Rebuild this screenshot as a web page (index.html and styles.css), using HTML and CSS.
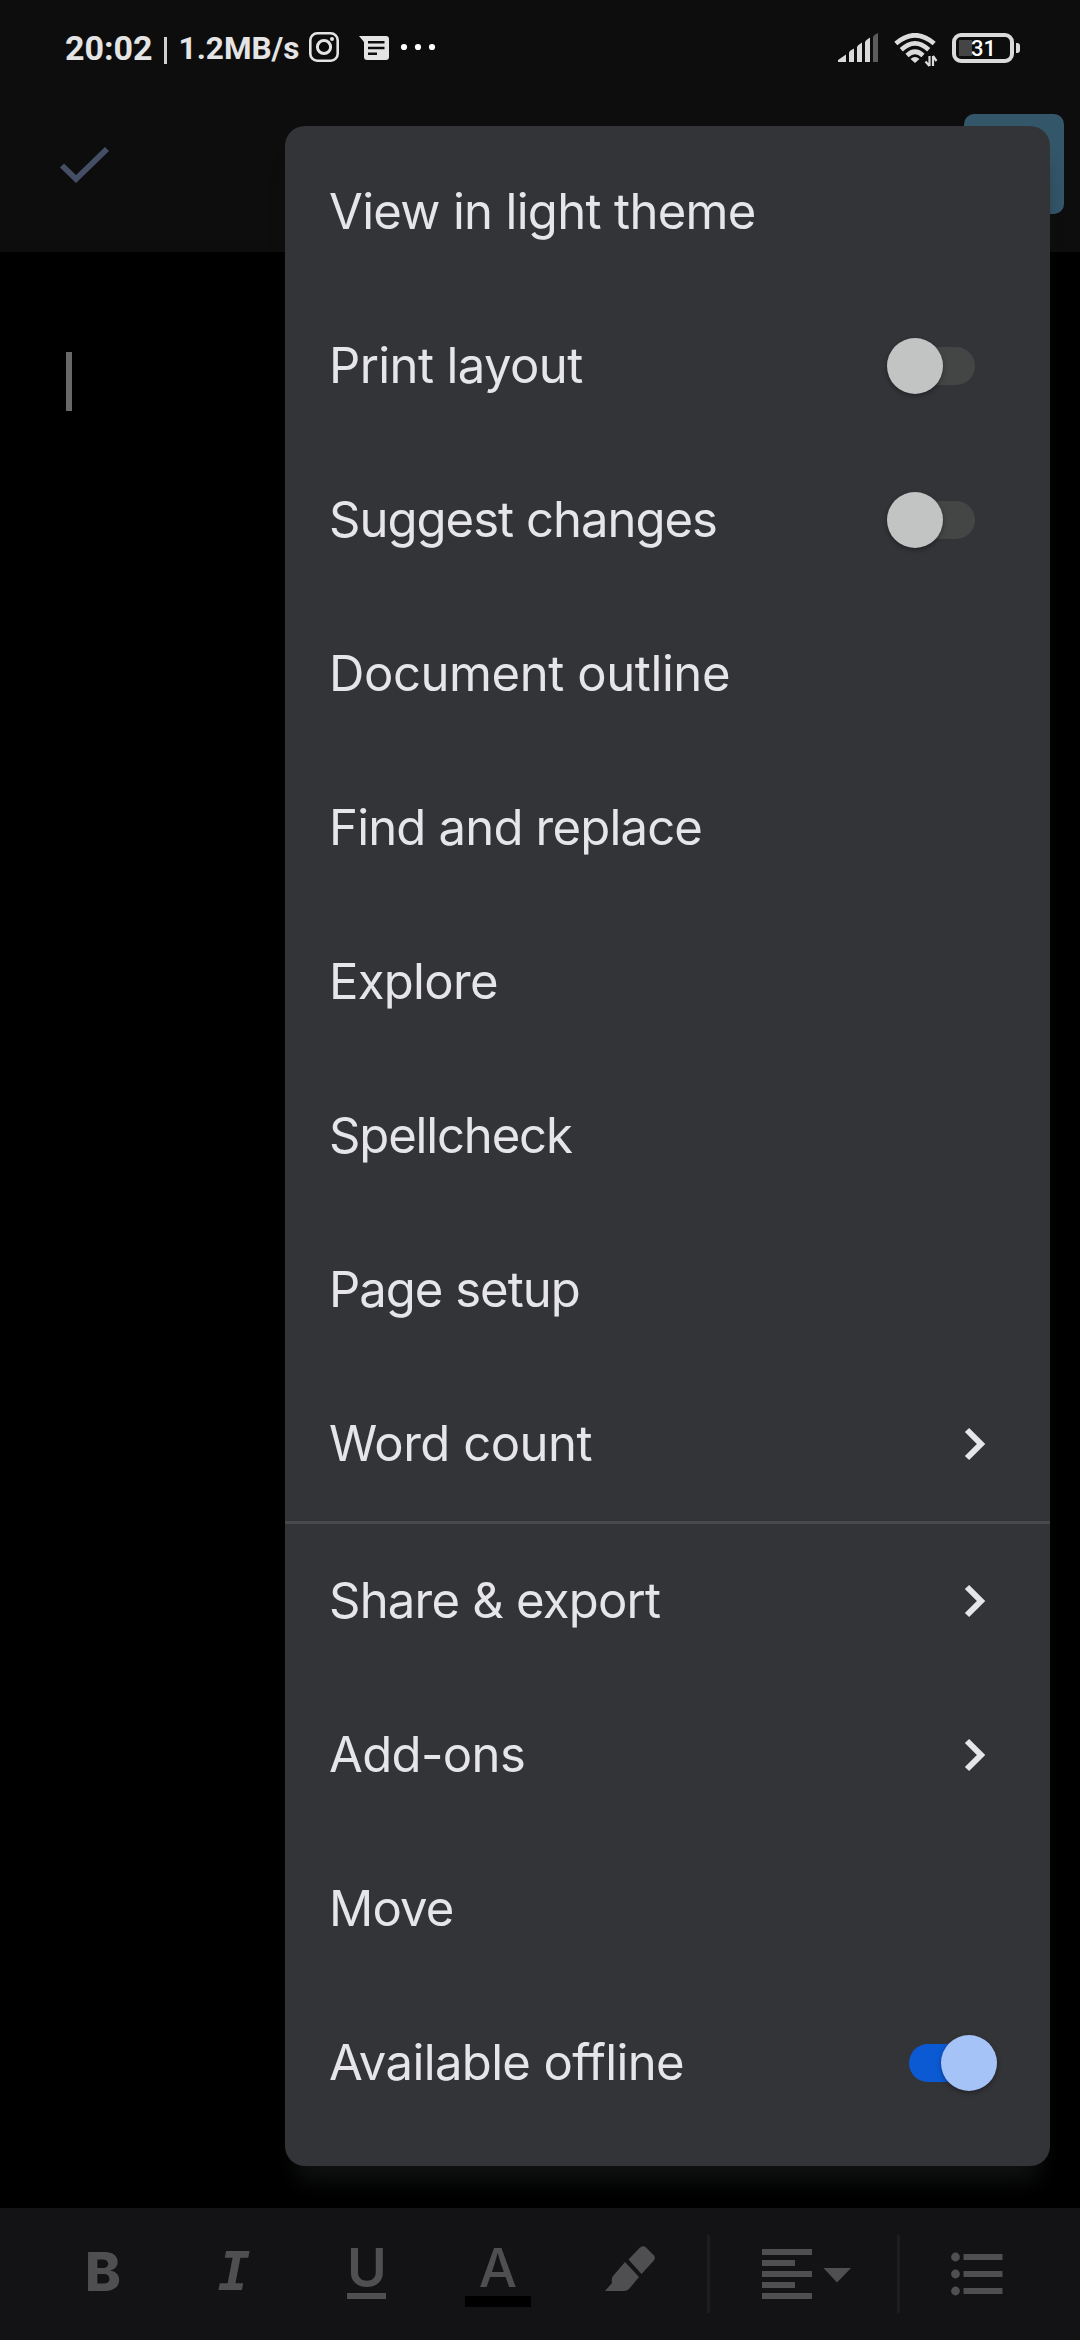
FILE: index.html
```html
<!DOCTYPE html>
<html lang="en">
<head>
<meta charset="utf-8">
<title>Document editor</title>
<link rel="stylesheet" href="styles.css">
</head>
<body>
<div class="screen">
  <header class="top">
    <div class="status">
      <span class="clock">20:02</span><span class="bar"></span><span class="speed">1.2MB/s</span>
      <svg class="insta" width="30" height="30" viewBox="0 0 30 30" fill="none" stroke="#e4e4e4"><rect x="1.3" y="1.3" width="27.4" height="27.4" rx="7" stroke-width="2.6"/><circle cx="15" cy="15" r="6.6" stroke-width="3"/><circle cx="23" cy="7" r="2" fill="#e4e4e4" stroke="none"/></svg>
      <svg class="msg" width="30" height="25" viewBox="0 0 30 25"><path d="M0 0H27Q30 0 30 3V21Q30 24 27 24H8Q5 24 5 21V6Z" fill="#e4e4e4"/><path d="M9 6.2H25.500M9 12H25.500M9 17.800H18" stroke="#0d0d0e" stroke-width="2.500"/></svg>
      <svg class="dots" width="36" height="8" viewBox="0 0 36 8" fill="#fff"><circle cx="4" cy="4" r="3.1"/><circle cx="18" cy="4" r="3.1"/><circle cx="32" cy="4" r="3.1"/></svg>
      <svg class="signal" width="42" height="30" viewBox="0 0 42 30" fill="#dadada"><path d="M0 29V27L8 21.500V29ZM11 29V20Q11 18.500 12.500 17.500L16 15.500V29ZM19 29V14.500Q19 13 20.500 12L24 9.500V29ZM27 29V9.500Q27 8 28.500 7L32 4.500V29Z"/><path d="M35 29V4.500Q35 3 36.500 2L40 0V29Z" fill="#5c5c5c"/></svg>
      <svg class="wifi" width="44" height="34" viewBox="0 0 44 34" fill="none" stroke="#dcdcdc" stroke-width="4.600"><path d="M1.800 10.500Q21 -6 40.200 10.500"/><path d="M7.300 16.800Q21 4 34.700 16.800"/><path d="M13 22.500Q21 15 29 22.500"/><path d="M21 30L16.500 26Q21 22 25.500 26Z" fill="#dcdcdc" stroke="none"/><path d="M35.500 23V33M35.500 33L31.500 28.500M39 33V23M39 23L42.500 28" stroke-width="2.200"/></svg>
      <div class="battery"><span class="charge"></span><span class="level">31</span></div><span class="nub"></span>
    </div>
    <div class="appbar">
      <svg class="check" width="52" height="40" viewBox="0 0 52 40" fill="none" stroke="#444f66" stroke-width="5.800"><path d="M3 19.500L17 33L48 3"/></svg>
      <span class="share"></span>
    </div>
  </header>
  <main class="page"><div class="caret"></div></main>
  <footer class="tools">
    <span class="glyph b">B</span>
    <span class="glyph i">I</span>
    <span class="glyph u">U</span>
    <span class="glyph a">A</span>
    <svg class="pen" width="52" height="46" viewBox="0 0 52 46" fill="#4f4f51"><path d="M20 16L34 31L24 43Q22 45 19 45H0L7 37Q6 33 8 30Z"/><path d="M23.500 13.500L34.500 2Q38 -1 41 1.500L49 9.500Q51 12 48.500 15L36.500 28Z"/></svg>
    <span class="rule r1"></span>
    <svg class="align" width="90" height="52" viewBox="0 0 90 52" fill="#4f4f51"><path d="M0 1H50V7H0ZM0 12H33V18H0ZM0 23H50V29H0ZM0 34H33V40H0ZM0 45H50V51H0ZM61.500 20H89L75 34.500Z"/></svg>
    <span class="rule r2"></span>
    <svg class="list" width="52" height="44" viewBox="0 0 52 44" fill="#4f4f51"><circle cx="4.500" cy="5" r="4.400"/><circle cx="4.500" cy="22" r="4.400"/><circle cx="4.500" cy="39" r="4.400"/><path d="M12.500 2H51.500V8H12.500ZM12.500 19H51.500V25H12.500ZM12.500 36H51.500V42H12.500Z"/></svg>
  </footer>
  <nav class="menu">
    <div class="item"><span class="t1">View in light theme</span></div>
    <div class="item"><span class="t2">Print layout</span><i class="switch"></i></div>
    <div class="item"><span class="t3">Suggest changes</span><i class="switch"></i></div>
    <div class="item"><span class="t4">Document outline</span></div>
    <div class="item"><span class="t5">Find and replace</span></div>
    <div class="item"><span class="t6">Explore</span></div>
    <div class="item"><span class="t7">Spellcheck</span></div>
    <div class="item"><span class="t8">Page setup</span></div>
    <div class="item"><span class="t9">Word count</span><svg class="chev" width="24" height="36" viewBox="0 0 24 36"><path d="M5 4L19 18L5 32"/></svg></div>
    <div class="divider"></div>
    <div class="item"><span class="t10">Share &amp; export</span><svg class="chev" width="24" height="36" viewBox="0 0 24 36"><path d="M5 4L19 18L5 32"/></svg></div>
    <div class="item"><span class="t11">Add-ons</span><svg class="chev" width="24" height="36" viewBox="0 0 24 36"><path d="M5 4L19 18L5 32"/></svg></div>
    <div class="item"><span class="t12">Move</span></div>
    <div class="item"><span class="t13">Available offline</span><i class="switch on"></i></div>
  </nav>
</div>
</body>
</html>
```
FILE: styles.css
```css
* { box-sizing: border-box; }
body { margin: 0; background: #000; }
.screen { position: relative; width: 1080px; height: 2340px; overflow: hidden; display: flex; flex-direction: column; background: #000; font-family: Inter, "Open Sans", sans-serif; }
.top { height: 252px; background: #0d0d0e; }
.status { height: 96px; padding-left: 65px; display: flex; align-items: center; font: 700 34px/40px Roboto, sans-serif; color: #e4e4e4; }
.status svg, .status span, .battery { flex: none; }
.bar { width: 3px; height: 27px; margin: 5px 12px 0 11px; background: #d0d0d0; }
.speed { font-size: 31.5px; padding-top: 2px; }
.insta { margin: 0 0 2px 10px; }
.msg { margin-left: 20px; }
.dots { margin: 0 0 2px 11px; }
.signal { margin-left: auto; }
.wifi { margin: 3px 0 0 14px; }
.battery { position: relative; width: 62px; height: 30px; margin-left: 14px; border: 4px solid #dadada; border-radius: 9px; }
.charge { position: absolute; left: 3px; top: 3px; width: 13px; height: 16px; background: #454545; }
.level { position: absolute; left: 15px; top: 0; font: 500 22px/24px Roboto, sans-serif; color: #fff; }
.nub { width: 4px; height: 10px; margin: 0 60px 0 2px; background: #dadada; border-radius: 0 3px 3px 0; }
.appbar { height: 156px; padding: 18px 16px 0 59px; display: flex; justify-content: space-between; }
.check { margin-top: 32px; }
.share { width: 100px; height: 100px; border-radius: 10px; background: #345669; }
.page { flex: 1; padding: 100px 66px; }
.caret { width: 6px; height: 59px; background: #686868; }
.tools { height: 132px; display: flex; align-items: center; background: #131315; color: #4f4f51; }
.tools > * { flex: none; }
.glyph { height: 60px; margin-bottom: 5px; text-align: center; font: 700 54px/60px Inter, sans-serif; }
.b { width: 60px; margin-left: 73px; font-weight: 800; }
.i { width: 60px; margin-left: 71px; font: italic 700 54px/60px "DejaVu Sans Mono", monospace; }
.u, .a { height: 64px; font-weight: 600; line-height: 52px; margin-bottom: 0; }
.u { width: 39px; margin-left: 83px; }
.u::after { content: ""; display: block; width: 39px; height: 6px; margin-top: -1px; background: #4f4f51; }
.a { width: 66px; margin-left: 79px; font-weight: 500; }
.a::after { content: ""; display: block; width: 66px; height: 11px; margin-top: 2px; background: #000; }
.pen { margin-left: 74px; margin-bottom: 10px; }
.rule { width: 3px; height: 78px; background: #1d1d1f; }
.r1 { margin-left: 50px; }
.align { margin-left: 52px; }
.r2 { margin-left: 45px; }
.list { margin-left: 51px; }
.menu { position: absolute; left: 285px; top: 126px; width: 765px; height: 2040px; padding-top: 9px; border-radius: 20px; background: #333438; box-shadow: 0 26px 22px -12px #101312; }
.item { height: 154px; padding: 0 53px 0 44px; display: flex; align-items: center; justify-content: space-between; font-size: 49px; line-height: 60px; color: #e6e6e8; white-space: nowrap; }
.t1 { letter-spacing: -.67px; }
.t2 { letter-spacing: -.6px; }
.t3 { letter-spacing: -.98px; }
.t4 { letter-spacing: -.41px; }
.t5 { letter-spacing: -.8px; }
.t6 { letter-spacing: -.7px; }
.t7 { letter-spacing: -1.15px; }
.t8 { letter-spacing: -1px; }
.t9 { letter-spacing: -.48px; }
.t10 { letter-spacing: -.77px; }
.t11 { letter-spacing: -.63px; }
.t12 { letter-spacing: -.87px; }
.t13 { letter-spacing: -.63px; }
.divider { height: 3px; background: #48494b; }
.chev { margin-right: 11px; fill: none; stroke: #e6e6e8; stroke-width: 6; }
.switch { position: relative; width: 66px; height: 38px; margin-right: 22px; border-radius: 19px; background: #444645; }
.switch::before { content: ""; position: absolute; left: -22px; top: -9px; width: 56px; height: 56px; border-radius: 50%; background: #c2c4c3; box-shadow: 0 2px 5px rgba(0,0,0,.35); }
.switch.on { background: #0c5ad3; }
.switch.on::before { left: 32px; background: #a5c3f6; }
```
